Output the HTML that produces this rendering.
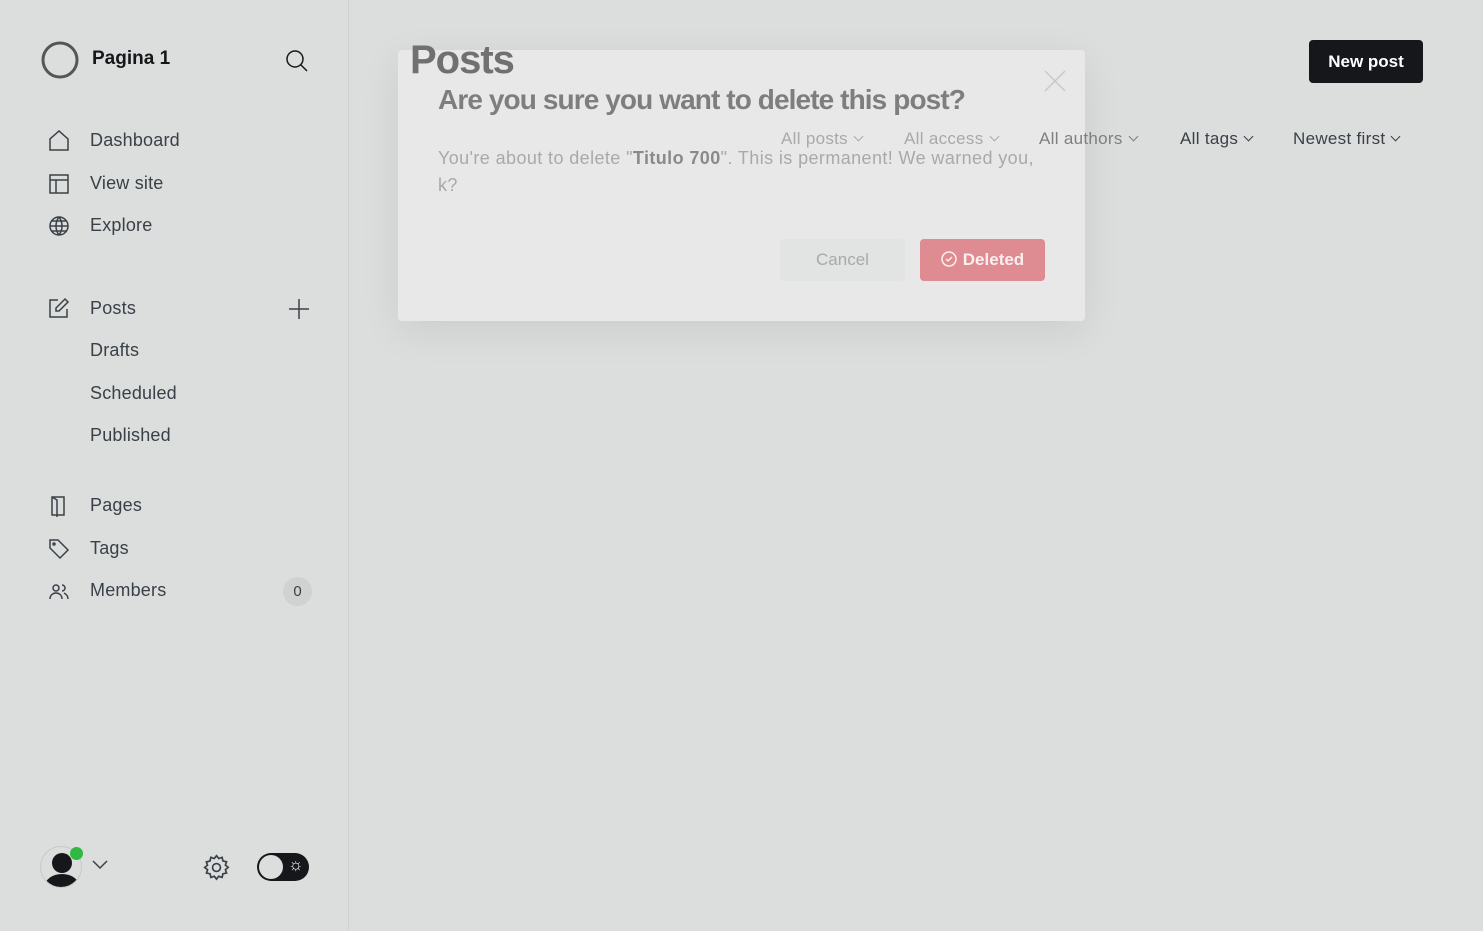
<!DOCTYPE html>
<html><head><meta charset="utf-8"><style>
*{box-sizing:border-box;margin:0;padding:0}
body{width:1483px;height:931px;background:#dcdedd;font-family:"Liberation Sans",sans-serif;position:relative;overflow:hidden;color:#2a2f35}
.side{position:absolute;left:0;top:0;width:349px;height:931px;border-right:1px solid #cfd1d0}
.it{position:absolute;left:90px;font-size:18px;color:#394047;letter-spacing:.2px}
.ic{position:absolute;left:48px}
svg{fill:none;stroke:#394047;stroke-width:1.5}
.modal{position:absolute;left:398px;top:50px;width:687px;height:271px;background:#e8e8e8;border-radius:4px;box-shadow:0 10px 40px rgba(0,0,0,.08)}
.f{position:absolute;top:129px;font-size:17px;letter-spacing:.3px;white-space:nowrap}
.f i{display:inline-block;width:7px;height:7px;border-right:1.3px solid currentColor;border-bottom:1.3px solid currentColor;transform:rotate(45deg);margin:0 0 4px 7px}
</style></head><body>
<div class="side">
<svg style="position:absolute;left:40px;top:40px" width="40" height="40" viewBox="0 0 40 40"><circle cx="20" cy="20" r="17" stroke="#555" stroke-width="3"/></svg>
<div style="position:absolute;left:92px;top:48px;font-size:19px;font-weight:bold;color:#15171a">Pagina 1</div>
<svg style="position:absolute;left:284px;top:48px" width="26" height="26" viewBox="0 0 26 26"><circle cx="11" cy="11" r="8" stroke="#15171a"/><path d="M17 17l6 6" stroke="#15171a"/></svg>
<svg class="ic" style="top:130px" width="22" height="22" viewBox="0 0 22 22"><path d="M2 20V9l9-8 9 8v11z"/></svg><div class="it" style="top:130px">Dashboard</div>
<svg class="ic" style="top:173px" width="22" height="22" viewBox="0 0 22 22"><rect x="2" y="2" width="18" height="18"/><path d="M2 7h18M8 7v13"/></svg><div class="it" style="top:173px">View site</div>
<svg class="ic" style="top:215px" width="22" height="22" viewBox="0 0 22 22"><circle cx="11" cy="11" r="9"/><path d="M2 11h18M11 2c-4 5-4 13 0 18M11 2c4 5 4 13 0 18M4 6h14M4 16h14"/></svg><div class="it" style="top:215px">Explore</div>
<svg class="ic" style="top:297px" width="22" height="22" viewBox="0 0 22 22"><path d="M10 3H2v17h17v-8M17 2l3 3-9 9H8v-3z"/></svg><div class="it" style="top:298px">Posts</div>
<svg style="position:absolute;left:287px;top:297px" width="24" height="24" viewBox="0 0 24 24"><path d="M12 2v20M2 12h20"/></svg>
<div class="it" style="top:340px">Drafts</div>
<div class="it" style="top:383px">Scheduled</div>
<div class="it" style="top:425px">Published</div>
<svg class="ic" style="top:495px" width="22" height="22" viewBox="0 0 22 22"><path d="M4 2h12v18H4zM4 2l5 3v17"/></svg><div class="it" style="top:495px">Pages</div>
<svg class="ic" style="top:538px" width="22" height="22" viewBox="0 0 22 22"><path d="M2 2h8l10 10-8 8L2 10z"/><circle cx="6" cy="6" r="1"/></svg><div class="it" style="top:538px">Tags</div>
<svg class="ic" style="top:581px" width="22" height="22" viewBox="0 0 22 22"><circle cx="8" cy="7" r="3"/><path d="M2 18c0-4 3-6 6-6s6 2 6 6M14 4a3 3 0 010 6M16 12c2 1 4 3 4 6"/></svg><div class="it" style="top:580px">Members</div>
<div style="position:absolute;left:283px;top:577px;width:29px;height:29px;border-radius:50%;background:#d0d2d1;font-size:15px;text-align:center;line-height:29px;color:#394047">0</div>
<div style="position:absolute;left:40px;top:846px;width:42px;height:42px;border-radius:50%;border:1px solid #c8c8c8;overflow:hidden"><div style="position:absolute;left:11px;top:6px;width:20px;height:20px;border-radius:50%;background:#15171a"></div><div style="position:absolute;left:4px;top:27px;width:34px;height:24px;border-radius:50%;background:#15171a"></div></div>
<div style="position:absolute;left:70px;top:847px;width:13px;height:13px;border-radius:50%;background:#30b843"></div>
<svg style="position:absolute;left:92px;top:860px" width="16" height="10" viewBox="0 0 16 10"><path d="M1 1l7 7 7-7"/></svg>
<svg style="position:absolute;left:203px;top:854px" width="27" height="27" viewBox="0 0 24 24"><circle cx="12" cy="12" r="3.5"/><path d="M12 1.5l2 2.5 3-1 .7 3.2 3.2.7-1 3 2.5 2-2.5 2 1 3-3.2.7-.7 3.2-3-1-2 2.5-2-2.5-3 1-.7-3.2-3.2-.7 1-3L1.5 12 4 10 3 7l3.2-.7L7 3l3 1z"/></svg>
<div style="position:absolute;left:257px;top:853px;width:52px;height:28px;border-radius:14px;background:#15171a"><div style="position:absolute;left:2px;top:2px;width:24px;height:24px;border-radius:50%;background:#dcdedd"></div><div style="position:absolute;left:31px;top:2px;color:#fff;font-size:17px">☼</div></div>
</div>
<div style="position:absolute;left:1309px;top:40px;width:114px;height:43px;background:#15171a;border-radius:4px;color:#fff;font-size:17px;font-weight:bold;text-align:center;line-height:43px">New post</div>
<div class="f" style="left:1180px;color:#394047">All tags<i></i></div>
<div class="f" style="left:1293px;color:#394047">Newest first<i></i></div>
<div class="modal">
<svg style="position:absolute;left:646px;top:20px" width="22" height="22" viewBox="0 0 22 22"><path d="M1 1l20 20M21 1L1 21" stroke="#c9c9c9"/></svg>
<div style="position:absolute;left:40px;top:34px;font-size:28px;font-weight:bold;color:#7e7e7e;letter-spacing:-.9px">Are you sure you want to delete this post?</div>
<div style="position:absolute;left:40px;top:95px;width:602px;font-size:18px;line-height:27px;color:#a9a9a9;letter-spacing:.4px">You're about to delete "<b style="color:#8a8a8a">Titulo 700</b>". This is permanent! We warned you, k?</div>
<div style="position:absolute;left:382px;top:189px;width:125px;height:42px;background:#e2e3e3;border-radius:4px;color:#a9a9a9;font-size:17px;text-align:center;line-height:42px">Cancel</div>
<div style="position:absolute;left:522px;top:189px;width:125px;height:42px;background:#de8c92;border-radius:4px;color:#fbeeee;font-size:17px;font-weight:bold;text-align:center;line-height:42px"><svg width="16" height="16" viewBox="0 0 16 16" style="vertical-align:-2px;margin-right:6px;stroke:#fbeeee"><circle cx="8" cy="8" r="7"/><path d="M5 8l2 2 4-4"/></svg>Deleted</div>
</div>
<div style="position:absolute;left:410px;top:38px;font-size:40px;font-weight:bold;color:#707070;letter-spacing:-1px">Posts</div>
<div class="f" style="left:781px;color:#a9a9a9">All posts<i></i></div>
<div class="f" style="left:904px;color:#a9a9a9">All access<i></i></div>
<div class="f" style="left:1039px;color:#7d7f80">All authors<i></i></div>
</body></html>
